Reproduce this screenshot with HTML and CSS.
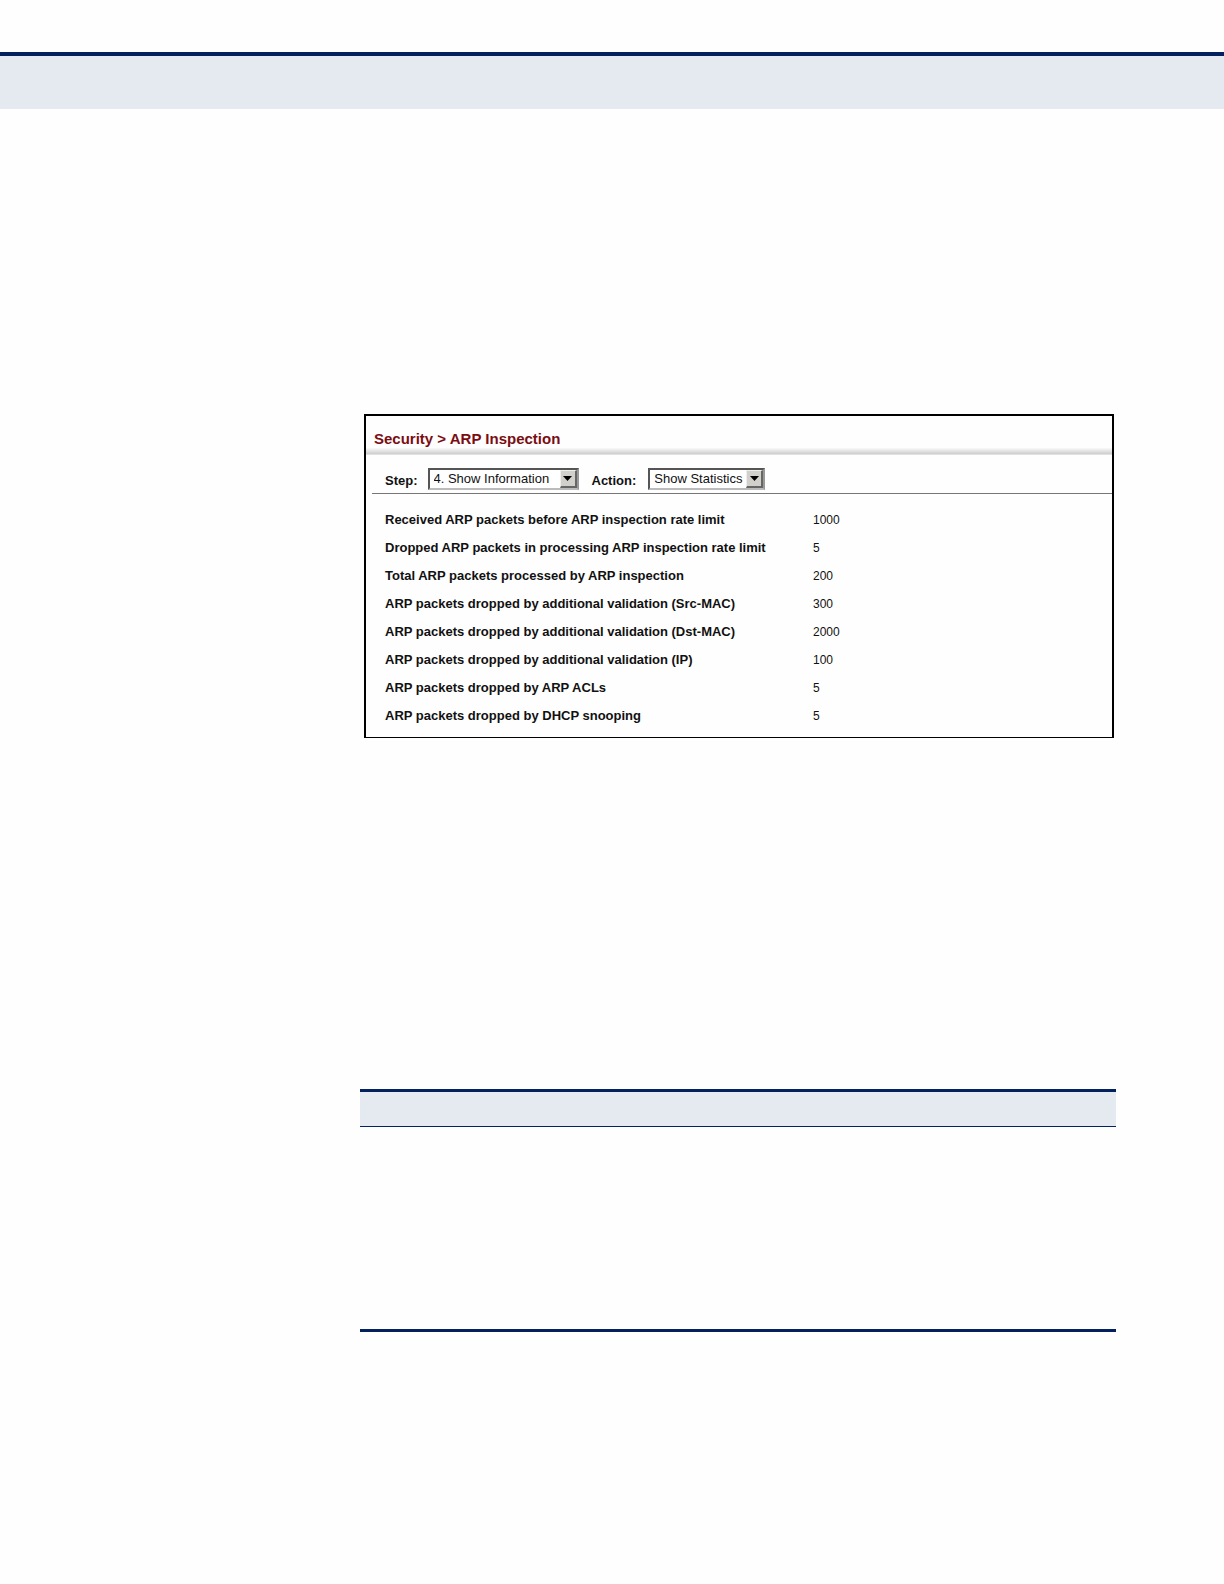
FILE: index.html
```html
<!DOCTYPE html>
<html lang="en">
<head>
<meta charset="utf-8">
<title>Security &gt; ARP Inspection</title>
<link rel="stylesheet" href="styles.css">
</head>
<body>
<header class="page-band"></header>
<main class="content">
  <section class="panel">
    <h1 class="panel-title">Security &gt; ARP Inspection</h1>
    <div class="shade"></div>
    <form class="toolbar">
      <label class="label" for="step">Step:</label>
      <span class="picker picker-step">
        <select id="step" class="select"><option>4. Show Information</option></select>
        <span class="arrow"><svg width="9" height="5" viewBox="0 0 18 10"><path d="M0 0h18L9 10z"/></svg></span>
      </span>
      <label class="label" for="action">Action:</label>
      <span class="picker picker-action">
        <select id="action" class="select"><option>Show Statistics</option></select>
        <span class="arrow"><svg width="9" height="5" viewBox="0 0 18 10"><path d="M0 0h18L9 10z"/></svg></span>
      </span>
    </form>
    <table class="stats">
      <tbody>
        <tr><th scope="row">Received ARP packets before ARP inspection rate limit</th><td>1000</td></tr>
        <tr><th scope="row">Dropped ARP packets in processing ARP inspection rate limit</th><td>5</td></tr>
        <tr><th scope="row">Total ARP packets processed by ARP inspection</th><td>200</td></tr>
        <tr><th scope="row">ARP packets dropped by additional validation (Src-MAC)</th><td>300</td></tr>
        <tr><th scope="row">ARP packets dropped by additional validation (Dst-MAC)</th><td>2000</td></tr>
        <tr><th scope="row">ARP packets dropped by additional validation (IP)</th><td>100</td></tr>
        <tr><th scope="row">ARP packets dropped by ARP ACLs</th><td>5</td></tr>
        <tr><th scope="row">ARP packets dropped by DHCP snooping</th><td>5</td></tr>
      </tbody>
    </table>
  </section>
  <section class="sheet">
    <div class="sheet-head"></div>
    <div class="sheet-body"></div>
  </section>
</main>
</body>
</html>
```
FILE: styles.css
```css
* { box-sizing: border-box; }

body {
  margin: 0;
  padding-top: 52px;
  background: #fefefe;
  color: #111;
  font-family: "Liberation Sans", Arial, sans-serif;
  font-size: 13px;
}

.page-band {
  height: 57px;
  border-top: 4px solid #04215f;
  background: #e5e9f0;
}

.content {
  padding: 305px 108px 252px 360px;
}

.panel {
  margin: 0 2px 0 4px;
  border: 2px solid #000;
  border-bottom-width: 1px;
}

.panel-title {
  margin: 0;
  padding: 13px 8px 0;
  color: #7a0d12;
  font-size: 15px;
  line-height: 19px;
}

.shade {
  height: 7px;
  background: linear-gradient(#fafafa, #cfcfcf 80%, #ececec);
}

.toolbar {
  display: flex;
  align-items: flex-start;
  margin-left: 6px;
  padding: 13px 0 3px 13px;
  border-bottom: 1px solid #777;
}

.label {
  padding-top: 5px;
  font-weight: bold;
  line-height: 16px;
}

.picker {
  position: relative;
  height: 22px;
}

.picker-step {
  width: 151px;
  margin: 0 13px 0 10px;
}

.picker-action {
  width: 117px;
  margin-left: 12px;
}

.select {
  appearance: none;
  width: 100%;
  height: 22px;
  margin: 0;
  padding: 0 18px 1px 4px;
  border: 2px solid #555;
  border-right-color: #999;
  border-bottom-color: #bbb;
  border-radius: 0;
  background: #fff;
  color: #111;
  font: inherit;
}

.arrow {
  position: absolute;
  top: 2px;
  right: 2px;
  bottom: 2px;
  display: flex;
  align-items: center;
  justify-content: center;
  width: 17px;
  border: 1px solid #eee;
  border-right: 2px solid #666;
  border-bottom: 2px solid #666;
  background: #d2d0cb;
  pointer-events: none;
}

.stats {
  width: 100%;
  margin: 12px 0 7px;
  border-collapse: collapse;
}

.stats th,
.stats td {
  height: 28px;
  padding: 0;
  line-height: 16px;
  text-align: left;
}

.stats th {
  width: 447px;
  padding-left: 19px;
}

.stats td {
  font-size: 12px;
}

.sheet {
  margin-top: 351px;
  border-top: 3px solid #04215f;
  border-bottom: 3px solid #04215f;
}

.sheet-head {
  height: 35px;
  border-bottom: 1px solid #04215f;
  background: #e5e9f0;
}

.sheet-body {
  height: 202px;
}
```
